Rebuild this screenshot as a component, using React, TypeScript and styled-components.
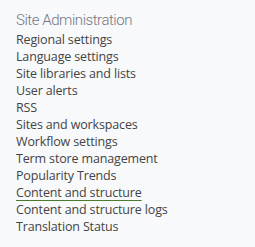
import React from "react";
import styled, { createGlobalStyle } from "styled-components";

const Global = createGlobalStyle`
  html, body { margin: 0; padding: 0; background: #f8f9fb; }
  body { font-family: "Open Sans", "Noto Sans", sans-serif; }
`;

const Panel = styled.div`
  padding: 11px 0 0 16px;
  display: flex;
  flex-direction: column;
`;

const Heading = styled.h2`
  margin: 0 0 2px 0;
  font-family: Roboto, "Open Sans", sans-serif;
  font-size: 15px;
  font-weight: 300;
  line-height: 18px;
  color: #757586;
  letter-spacing: -0.45px;
`;

const List = styled.ul`
  margin: 0;
  padding: 0;
  list-style: none;
`;

const Item = styled.li`
  font-size: 12.5px;
  line-height: 17px;
`;

const Link = styled.a<{ $active?: boolean }>`
  color: #444444;
  text-decoration: ${(p) => (p.$active ? "underline" : "none")};
  text-decoration-color: #4b7a2c;
  text-decoration-thickness: 1px;
  text-underline-offset: 3px;
  letter-spacing: -0.15px;
`;

const items = [
  "Regional settings",
  "Language settings",
  "Site libraries and lists",
  "User alerts",
  "RSS",
  "Sites and workspaces",
  "Workflow settings",
  "Term store management",
  "Popularity Trends",
  "Content and structure",
  "Content and structure logs",
  "Translation Status",
];

export default function App() {
  return (
    <>
      <Global />
      <Panel>
        <Heading>Site Administration</Heading>
        <List>
          {items.map((t) => (
            <Item key={t}>
              <Link href="#" $active={t === "Content and structure"}>
                {t}
              </Link>
            </Item>
          ))}
        </List>
      </Panel>
    </>
  );
}
